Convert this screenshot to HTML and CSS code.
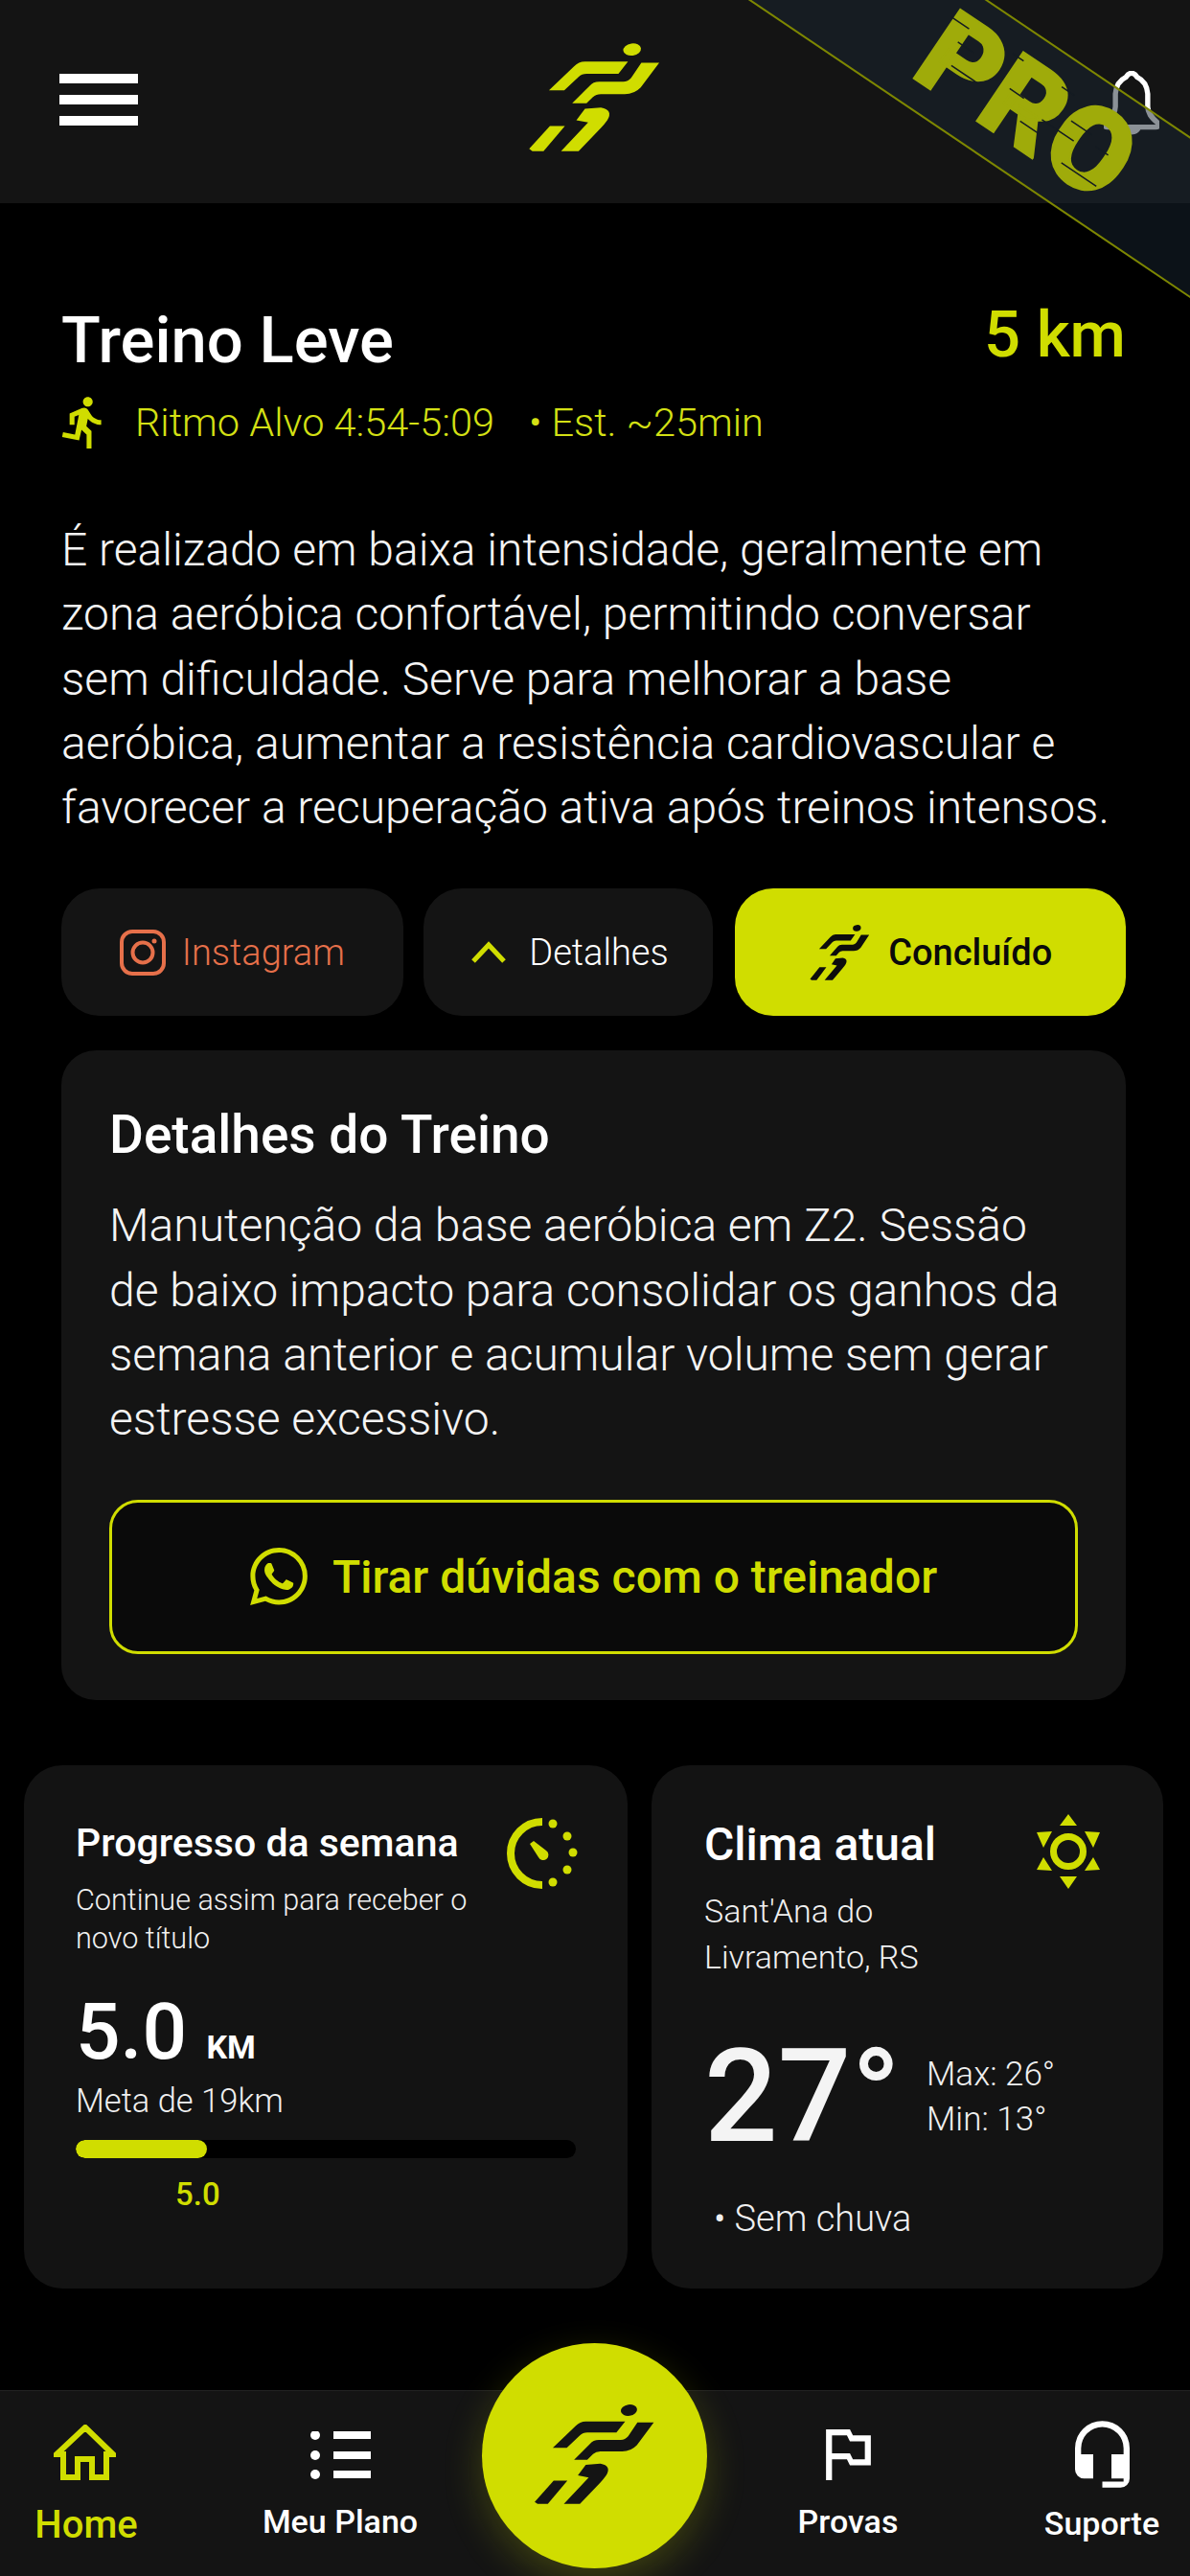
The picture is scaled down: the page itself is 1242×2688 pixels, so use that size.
FILE: index.html
```html
<!DOCTYPE html>
<html lang="pt-BR">
<head>
<meta charset="utf-8">
<title>Treino Leve</title>
<link rel="stylesheet" href="styles.css">
</head>
<body>
<svg class="defs" width="0" height="0" aria-hidden="true">
  <symbol id="runner" viewBox="150 70 430 352" preserveAspectRatio="none">
    <ellipse cx="483" cy="96" rx="28" ry="19" transform="rotate(-8 483 96)"/>
    <path d="M222 224L300 150Q315 134 335 134H470L440 172H340Q325 172 315 182L270 224Z"/>
    <path d="M295 265L350 210Q360 197 380 197H455Q470 197 480 185L512 138H568L510 215Q490 236 460 236H385Q370 236 360 245L340 265Z"/>
    <path d="M260 415L345 325L308 318L335 282L385 278Q425 285 405 318Q395 332 385 342L315 415Z"/>
    <path d="M160 408L225 336H272L205 415H170Z"/>
  </symbol>
</svg>

<header class="topbar">
  <button class="menu" aria-label="Menu"><span></span><span></span><span></span></button>
  <svg class="logo"><use href="#runner"/></svg>
  <svg class="bell" viewBox="3.400 2.200 17.200 20">
    <path d="M12 2.800c-.9 0-1.400.7-1.800 1.300C8.300 5 7.200 6.900 7 9.200v4c0 1.900-1 3.200-3.100 5-.6.6-.2 1.300.6 1.300h15c.8 0 1.200-.7.6-1.300-2.100-1.800-3.100-3.100-3.100-5v-4c-.2-2.300-1.300-4.200-3.200-5.100-.4-.6-.9-1.300-1.800-1.300z"/>
    <path d="M9.800 19.600a2.400 2.400 0 004.400 0"/>
  </svg>
</header>

<div class="ribbon">
  <span class="ribbon-text">PRO</span>
  <svg class="ribbon-scratches" viewBox="0 0 300 140" aria-hidden="true">
    <path d="M32 34h22M52 52h20M60 76h34M106 30h14M124 62h18M152 84h22M168 30h16M170 70h40M196 54h26M212 96h44M232 62h16"/>
  </svg>
</div>

<main class="content">
  <section class="workout">
    <div class="workout-head">
      <div>
        <h1 class="workout-title">Treino Leve</h1>
        <div class="workout-meta">
          <svg class="run-icon" viewBox="3.500 1.400 15.500 21.300"><path d="M13.490 5.480c1.100 0 2-.9 2-2s-.9-2-2-2-2 .9-2 2 .9 2 2 2zm-3.600 13.900l1-4.400 2.100 2v6h2v-7.500l-2.100-2 .6-3c1.300 1.500 3.300 2.500 5.500 2.500v-2c-1.900 0-3.500-1-4.300-2.400l-1-1.600c-.4-.6-1-1-1.700-1-.3 0-.5.1-.8.1l-5.200 2.200v4.700h2v-3.400l1.800-.7-1.600 8.100-4.900-1-.4 2 7 1.400z"/></svg>
          <span>Ritmo Alvo 4:54-5:09</span>
          <span class="meta-est">• Est. ~25min</span>
        </div>
      </div>
      <div class="workout-km">5 km</div>
    </div>

    <p class="workout-text">É realizado em baixa intensidade, geralmente em zona aeróbica confortável, permitindo conversar sem dificuldade. Serve para melhorar a base aeróbica, aumentar a resistência cardiovascular e favorecer a recuperação ativa após treinos intensos.</p>

    <div class="actions">
      <button class="action action-insta">
        <svg class="insta-icon" viewBox="0 0 48 48"><rect x="2" y="2" width="44" height="44" rx="11"/><circle cx="24" cy="24" r="10.500"/><circle class="insta-dot" cx="36" cy="12" r="2.500"/></svg>
        Instagram
      </button>
      <button class="action action-details">
        <svg class="chevron" viewBox="0 0 38 24"><path d="M3 21L19 4L35 21"/></svg>
        Detalhes
      </button>
      <button class="action action-done">
        <svg class="done-icon"><use href="#runner"/></svg>
        Concluído
      </button>
    </div>

    <article class="details">
      <h2 class="details-title">Detalhes do Treino</h2>
      <p class="details-text">Manutenção da base aeróbica em Z2. Sessão de baixo impacto para consolidar os ganhos da semana anterior e acumular volume sem gerar estresse excessivo.</p>
      <button class="coach">
        <svg class="wa-icon" viewBox="0 0 24 24"><path d="M17.472 14.382c-.297-.149-1.758-.867-2.030-.967-.273-.099-.471-.148-.67.150-.197.297-.767.966-.94 1.164-.173.199-.347.223-.644.075-.297-.150-1.255-.463-2.390-1.475-.883-.788-1.480-1.761-1.653-2.059-.173-.297-.018-.458.130-.606.134-.133.298-.347.446-.520.149-.174.198-.298.298-.497.099-.198.050-.371-.025-.520-.075-.149-.669-1.612-.916-2.207-.242-.579-.487-.5-.669-.510-.173-.008-.371-.010-.570-.010-.198 0-.520.074-.792.372-.272.297-1.040 1.016-1.040 2.479 0 1.462 1.065 2.875 1.213 3.074.149.198 2.096 3.200 5.077 4.487.709.306 1.262.489 1.694.625.712.227 1.360.195 1.871.118.571-.085 1.758-.719 2.006-1.413.248-.694.248-1.289.173-1.413-.074-.124-.272-.198-.570-.347m-5.421 7.403h-.004a9.870 9.870 0 01-5.031-1.378l-.361-.214-3.741.982.998-3.648-.235-.374a9.860 9.860 0 01-1.510-5.260c.001-5.450 4.436-9.884 9.888-9.884 2.640 0 5.122 1.030 6.988 2.898a9.825 9.825 0 012.893 6.994c-.003 5.450-4.437 9.884-9.885 9.884m8.413-18.297A11.815 11.815 0 0012.050 0C5.495 0 .160 5.335.157 11.892c0 2.096.547 4.142 1.588 5.945L.057 24l6.305-1.654a11.882 11.882 0 005.683 1.448h.005c6.554 0 11.890-5.335 11.893-11.893a11.821 11.821 0 00-3.480-8.413z"/></svg>
        Tirar dúvidas com o treinador
      </button>
    </article>
  </section>

  <section class="widgets">
    <article class="widget progress">
      <div class="widget-head">
        <div>
          <h3 class="progress-title">Progresso da semana</h3>
        </div>
        <svg class="gauge" viewBox="0 0 76 76">
          <path class="gauge-arc" d="M37 4A33 33 0 0 0 37 70"/>
          <circle cx="48" cy="6" r="4.500"/><circle cx="63" cy="19" r="4.500"/><circle cx="69" cy="36" r="4.500"/><circle cx="63" cy="54" r="4.500"/><circle cx="48" cy="67" r="4.500"/>
          <path d="M24 27L28 24L41 34A5.500 5.500 0 1 1 33 41Z"/>
        </svg>
      </div>
      <p class="progress-sub">Continue assim para receber o<br>novo título</p>
      <div class="progress-value">5.0 <span class="progress-unit">KM</span></div>
      <div class="progress-goal">Meta de 19km</div>
      <div class="bar"><div class="bar-fill" style="width: 26.3%"></div></div>
      <div class="bar-label">5.0</div>
    </article>

    <article class="widget weather">
      <div class="weather-head">
        <h3 class="weather-title">Clima atual</h3>
        <svg class="sun" viewBox="-36 -40 72 80">
          <circle class="sun-ring" cx="0" cy="0" r="15.500"/>
          <path d="M0-39L-9-27H9ZM0 39L-9 26H9ZM17-21L33-20L26-4ZM26 6L33 19L17 20ZM-17-21L-33-20L-26-4ZM-26 6L-33 19L-17 20Z"/>
        </svg>
      </div>
      <p class="weather-place">Sant'Ana do<br>Livramento, RS</p>
      <div class="weather-temp">
        <span class="temp-now">27°</span>
        <span class="temp-range">Max: 26°<br>Min: 13°</span>
      </div>
      <div class="weather-rain">• Sem chuva</div>
    </article>
  </section>
</main>

<nav class="tabbar">
  <a class="tab tab-active">
    <svg class="tab-icon home" viewBox="0 0 65 58"><path d="M33 3L3 31H10V55H25V36H40V55H55V31H62Z"/></svg>
    <span>Home</span>
  </a>
  <a class="tab">
    <svg class="tab-icon list" viewBox="0 0 63 50"><circle cx="5" cy="4" r="5"/><circle cx="5" cy="25" r="5"/><circle cx="5" cy="45" r="5"/><rect x="24" y="0" width="39" height="8"/><rect x="24" y="21" width="39" height="8"/><rect x="24" y="41" width="39" height="8"/></svg>
    <span>Meu Plano</span>
  </a>
  <a class="tab-center" aria-label="Treinar">
    <svg class="center-icon"><use href="#runner"/></svg>
  </a>
  <a class="tab">
    <svg class="tab-icon flag" viewBox="5 4 15 17"><path d="M14 6l-1-2H5v17h2v-7h5l1 2h7V6h-6zm4 8h-4l-1-2H7V6h5l1 2h5v6z"/></svg>
    <span>Provas</span>
  </a>
  <a class="tab">
    <svg class="tab-icon headset" viewBox="3 1 18 22"><path d="M12 1a9 9 0 00-9 9v7a3 3 0 003 3h3v-8H5v-2a7 7 0 0114 0v2h-4v8h4v1h-7v2h6a3 3 0 003-3V10a9 9 0 00-9-9z"/></svg>
    <span>Suporte</span>
  </a>
</nav>
</body>
</html>
```

FILE: styles.css
```css
* { box-sizing: border-box; }

html, body { margin: 0; padding: 0; }

body {
  position: relative;
  width: 1242px;
  height: 2688px;
  overflow: hidden;
  display: flex;
  flex-direction: column;
  background: #000;
  color: #fff;
  font-family: Roboto, "Liberation Sans", sans-serif;
  font-weight: 300;
}

h1, h2, h3, p { margin: 0; }

button { font-family: inherit; border: 0; padding: 0; background: none; color: inherit; }

.defs { position: absolute; }

/* Header */
.topbar {
  height: 212px;
  flex: none;
  display: grid;
  grid-template-columns: 1fr auto 1fr;
  align-items: center;
  padding: 0 32px 10px 62px;
  background: #141414;
}

.menu { display: flex; flex-direction: column; gap: 12px; width: 82px; margin-top: 5px; }
.menu span { display: block; height: 10px; background: #fff; }

.logo { width: 143px; height: 117px; margin-left: -32px; fill: #d0dd00; }

.bell {
  justify-self: end;
  width: 58px;
  height: 68px;
  margin-top: 14px;
  fill: none;
  stroke: #fff;
  stroke-width: 1.600;
  stroke-linejoin: round;
  stroke-linecap: round;
}

/* PRO ribbon */
.ribbon {
  position: absolute;
  left: 622px;
  top: 42px;
  width: 900px;
  height: 140px;
  display: flex;
  align-items: center;
  justify-content: center;
  transform: rotate(34deg);
  background: rgba(24, 36, 48, .5);
  border-top: 2px solid #7e8700;
  border-bottom: 2px solid #7e8700;
}

.ribbon-text {
  font-size: 122px;
  line-height: .78;
  font-weight: 900;
  color: #9fab0a;
  -webkit-text-stroke: 2px #9fab0a;
}

.ribbon-scratches {
  position: absolute;
  left: 300px;
  top: 0;
  width: 300px;
  height: 140px;
  fill: none;
  stroke: #141b22;
  stroke-width: 1.500;
}

/* Main */
.content { flex: 1; display: flex; flex-direction: column; }

.workout { padding: 0 67px 0 64px; }

.workout-head {
  display: flex;
  justify-content: space-between;
  align-items: flex-start;
  padding-top: 101px;
}

.workout-title { font-size: 67px; line-height: 84px; font-weight: 500; }

.workout-km {
  font-size: 67px;
  line-height: 73px;
  font-weight: 500;
  color: #d0dd00;
}

.workout-meta {
  display: flex;
  align-items: center;
  margin-top: 17px;
  font-size: 41.500px;
  line-height: 54px;
  color: #d4e014;
  font-weight: 300;
}

.run-icon { width: 44px; height: 54px; margin-right: 33px; fill: #d0dd00; }

.meta-est { margin-left: 36px; }

.workout-text {
  margin-top: 72px;
  font-size: 48px;
  line-height: 67.300px;
  color: #f4f4f4;
}

.actions {
  display: flex;
  gap: 21px;
  margin-top: 51px;
  height: 133px;
}

.action {
  display: flex;
  align-items: center;
  justify-content: center;
  border-radius: 40px;
  font-size: 38px;
  font-weight: 300;
  background: #141414;
  color: #fff;
}

.action-insta { width: 357px; gap: 17px; color: #e6704a; }
.action-details { width: 303px; gap: 23px; padding-left: 3px; }
.action-done { width: 408px; margin-left: 2px; gap: 18px; background: #d0dd00; color: #0a0a0a; font-weight: 500; font-size: 38px; }

.insta-icon { width: 48px; height: 48px; fill: none; stroke: #e6704a; stroke-width: 4; }
.insta-dot { fill: #e6704a; stroke: none; }

.chevron { width: 38px; height: 24px; fill: none; stroke: #d0dd00; stroke-width: 5; }

.done-icon { width: 65px; height: 60px; fill: #0d0d0d; }

.details {
  margin-top: 36px;
  height: 678px;
  padding: 50px 50px 0;
  background: #141414;
  border-radius: 36px;
}

.details-title { font-size: 55px; line-height: 76px; font-weight: 500; }

.details-text {
  margin-top: 23px;
  font-size: 48px;
  line-height: 67.300px;
  color: #f4f4f4;
}

.coach {
  display: flex;
  align-items: center;
  justify-content: center;
  gap: 26px;
  width: 100%;
  height: 161px;
  margin-top: 50px;
  border: 3px solid #d0dd00;
  border-radius: 30px;
  background: #0a0a0a;
  color: #d0dd00;
  font-size: 48px;
  font-weight: 500;
}

.wa-icon { width: 60px; height: 60px; fill: #d0dd00; }

/* Widgets */
.widgets {
  display: grid;
  grid-template-columns: 630px 534px;
  gap: 25px;
  padding-left: 25px;
  margin-top: 68px;
}

.widget { height: 546px; background: #131313; border-radius: 40px; }

.progress { padding: 50px 54px 0 54px; }

.widget-head { display: flex; justify-content: space-between; align-items: flex-start; height: 88px; }

.progress-title { font-size: 41px; line-height: 64px; font-weight: 500; margin-top: -1px; }

.gauge { width: 76px; height: 76px; margin: 5px -4px 0 0; fill: #d0dd00; }
.gauge-arc { fill: none; stroke: #d0dd00; stroke-width: 8; }

.progress-sub { margin-top: -17px; font-size: 30.600px; line-height: 40px; color: #f0f0f0; }

.progress-value { margin-top: 27px; font-size: 82px; line-height: 100px; font-weight: 500; }

.progress-unit { font-size: 34px; font-weight: 700; margin-left: 0; }

.progress-goal { margin-top: -17px; font-size: 34.500px; line-height: 46px; color: #f0f0f0; }

.bar { height: 19px; margin-top: 18px; border-radius: 10px; background: #000; overflow: hidden; }
.bar-fill { height: 100%; border-radius: 10px; background: #d0dd00; }

.bar-label { margin: 18px 0 0 104px; font-size: 33px; line-height: 40px; font-weight: 500; color: #d0dd00; }

.weather { padding: 50px 0 0 55px; }

.weather-head { display: flex; align-items: flex-start; height: 70px; }

.weather-title { font-size: 48px; line-height: 66px; font-weight: 500; }

.sun { width: 72px; height: 80px; margin: 0 0 0 102px; fill: #d0dd00; flex: none; }
.sun-ring { fill: none; stroke: #d0dd00; stroke-width: 7; }

.weather-place { margin-top: 8px; font-size: 34px; line-height: 48px; color: #f0f0f0; }

.weather-temp { display: flex; align-items: center; gap: 27px; margin-top: 47px; }

.temp-now { font-size: 135px; line-height: 150px; font-weight: 500; color: #f4f4f4; }

.temp-range { font-size: 35px; line-height: 47px; color: #f0f0f0; }

.weather-rain { margin: 27px 0 0 10px; font-size: 38px; line-height: 50px; color: #f0f0f0; }

/* Tab bar */
.tabbar {
  flex: none;
  height: 194px;
  display: grid;
  grid-template-columns: repeat(5, 265px);
  justify-content: center;
  padding-right: 2px;
  background: #141414;
  border-top: 1px solid #222;
}

.tab {
  display: flex;
  flex-direction: column;
  align-items: center;
  font-size: 34px;
  font-weight: 500;
  color: #fff;
}

.tab-icon { fill: #fff; height: 70px; margin-top: 31px; margin-bottom: 16px; }

.tab-active { color: #d0dd00; font-size: 40px; }

.home { width: 65px; height: 58px; margin: 35px 4px 23px 0; fill: none; stroke: #d0dd00; stroke-width: 6; }
.list { width: 63px; height: 50px; margin-top: 42px; margin-bottom: 24px; }
.flag { width: 49px; height: 53px; margin-top: 40px; margin-bottom: 23px; }
.headset { width: 57px; height: 70px; margin-top: 31px; margin-bottom: 17px; }

.tab-center {
  justify-self: center;
  width: 235px;
  height: 235px;
  margin-top: -50px;
  display: flex;
  align-items: center;
  justify-content: center;
  border-radius: 50%;
  background: #d0dd00;
  box-shadow: 0 14px 40px rgba(208, 221, 0, .22);
}

.center-icon { width: 131px; height: 108px; margin-bottom: 4px; fill: #141414; }
```
